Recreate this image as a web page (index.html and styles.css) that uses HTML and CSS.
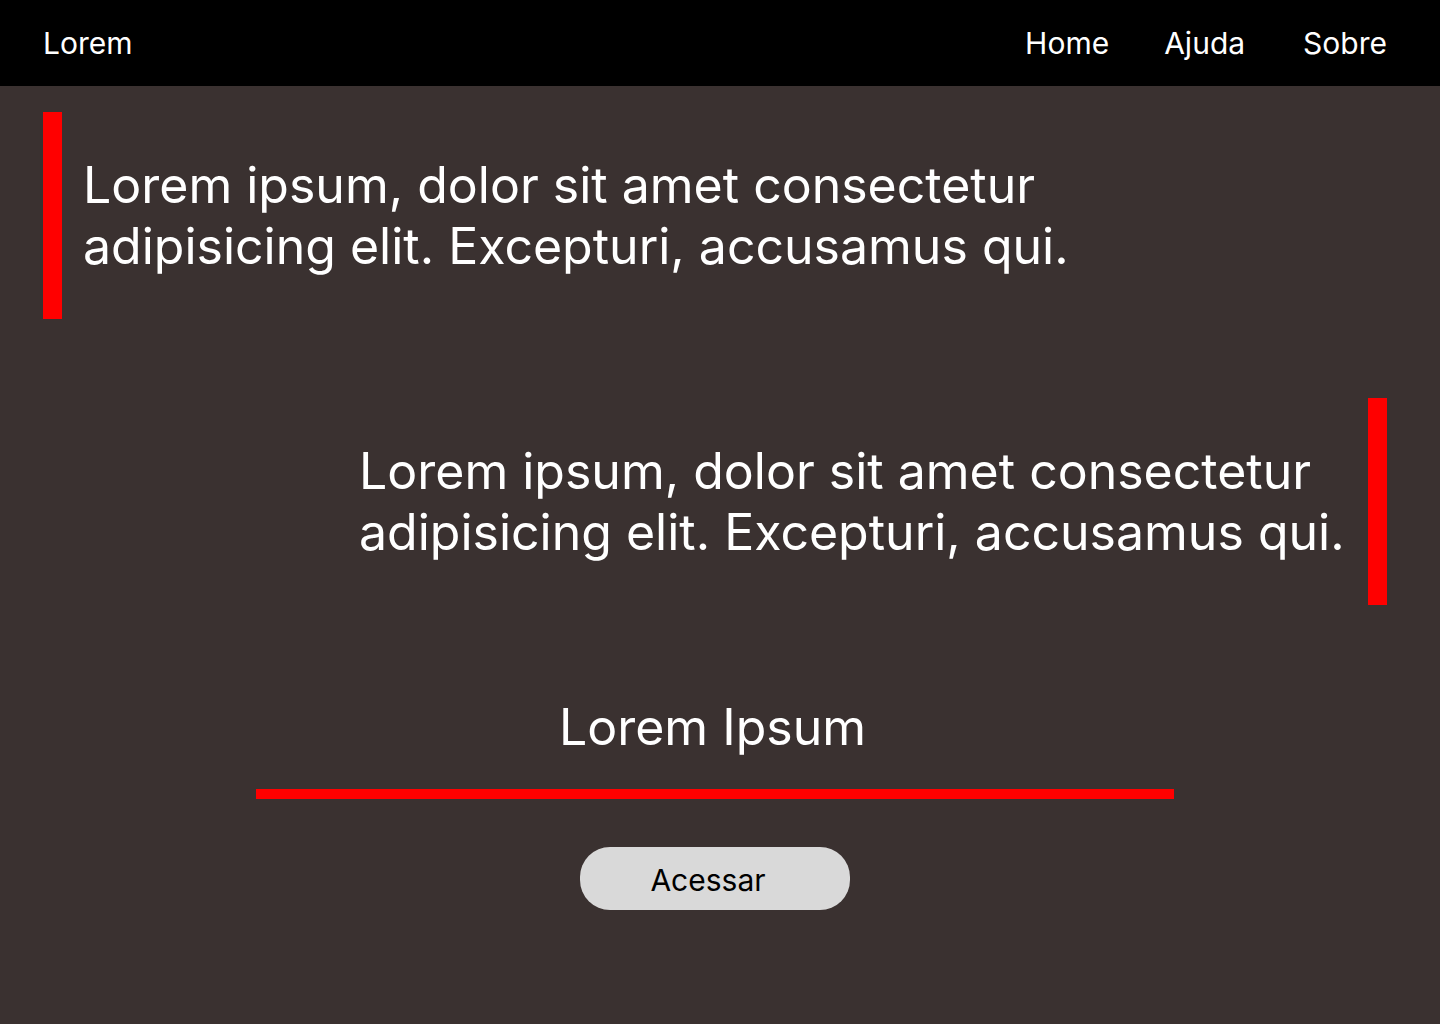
FILE: index.html
```html
<!DOCTYPE html>
<html lang="pt">
<head>
<meta charset="utf-8">
<title>Lorem</title>
<link rel="stylesheet" href="styles.css">
</head>
<body>
<header class="topbar">
  <div class="brand">Lorem</div>
  <nav class="nav">
    <a class="nav-link" href="#">Home</a>
    <a class="nav-link nav-link-mid" href="#">Ajuda</a>
    <a class="nav-link" href="#">Sobre</a>
  </nav>
</header>
<main class="content">
  <section class="quote quote-left">
    <div class="quote-bar"></div>
    <p class="quote-text">Lorem ipsum, dolor sit amet consectetur adipisicing elit. Excepturi, accusamus qui.</p>
  </section>
  <section class="quote quote-right">
    <p class="quote-text">Lorem ipsum, dolor sit amet consectetur adipisicing elit. Excepturi, accusamus qui.</p>
    <div class="quote-bar"></div>
  </section>
  <section class="cta">
    <h2 class="cta-title">Lorem Ipsum</h2>
    <div class="cta-rule"></div>
    <button class="cta-button" type="button">Acessar</button>
  </section>
</main>
</body>
</html>
```

FILE: styles.css
```css
* { box-sizing: border-box; }

html, body {
  margin: 0;
  padding: 0;
}

body {
  background: #3a3130;
  color: #ffffff;
  font-family: "Inter", "Noto Sans", sans-serif;
  min-height: 1024px;
}

.topbar {
  height: 86px;
  background: #000000;
  display: flex;
  align-items: center;
  justify-content: space-between;
  padding: 0 53px 0 43px;
}

.brand {
  font-size: 30px;
  color: #ffffff;
}

.nav {
  display: flex;
}

.nav-link {
  font-size: 30px;
  color: #ffffff;
  text-decoration: none;
}

.nav-link-mid {
  margin: 0 58px 0 55px;
}

.content {
  padding-top: 26px;
}

.quote {
  display: flex;
  align-items: stretch;
}

.quote-bar {
  width: 19px;
  flex: none;
  background: #ff0000;
}

.quote-text {
  margin: 0;
  width: 1000px;
  flex: none;
  padding: 43px 0;
  font-size: 50px;
  line-height: 1.21;
  color: #ffffff;
}

.quote-left {
  padding-left: 43px;
  gap: 21px;
}

.quote-right {
  margin-top: 79px;
  justify-content: flex-end;
  padding-right: 53px;
  gap: 9px;
}

.cta {
  margin: 92px 0 0 256px;
  width: 918px;
  display: flex;
  flex-direction: column;
  align-items: center;
}

.cta-title {
  margin: 0;
  padding-right: 5px;
  font-size: 50px;
  font-weight: 400;
  line-height: 1.21;
  color: #ffffff;
}

.cta-rule {
  margin-top: 31px;
  width: 100%;
  height: 10px;
  background: #ff0000;
}

.cta-button {
  margin-top: 48px;
  width: 270px;
  height: 63px;
  border: none;
  border-radius: 30px;
  background: #d9d9d9;
  color: #000000;
  font-family: "Inter", "Noto Sans", sans-serif;
  font-size: 30px;
  padding: 3px 14px 0 0;
  cursor: pointer;
}
```
